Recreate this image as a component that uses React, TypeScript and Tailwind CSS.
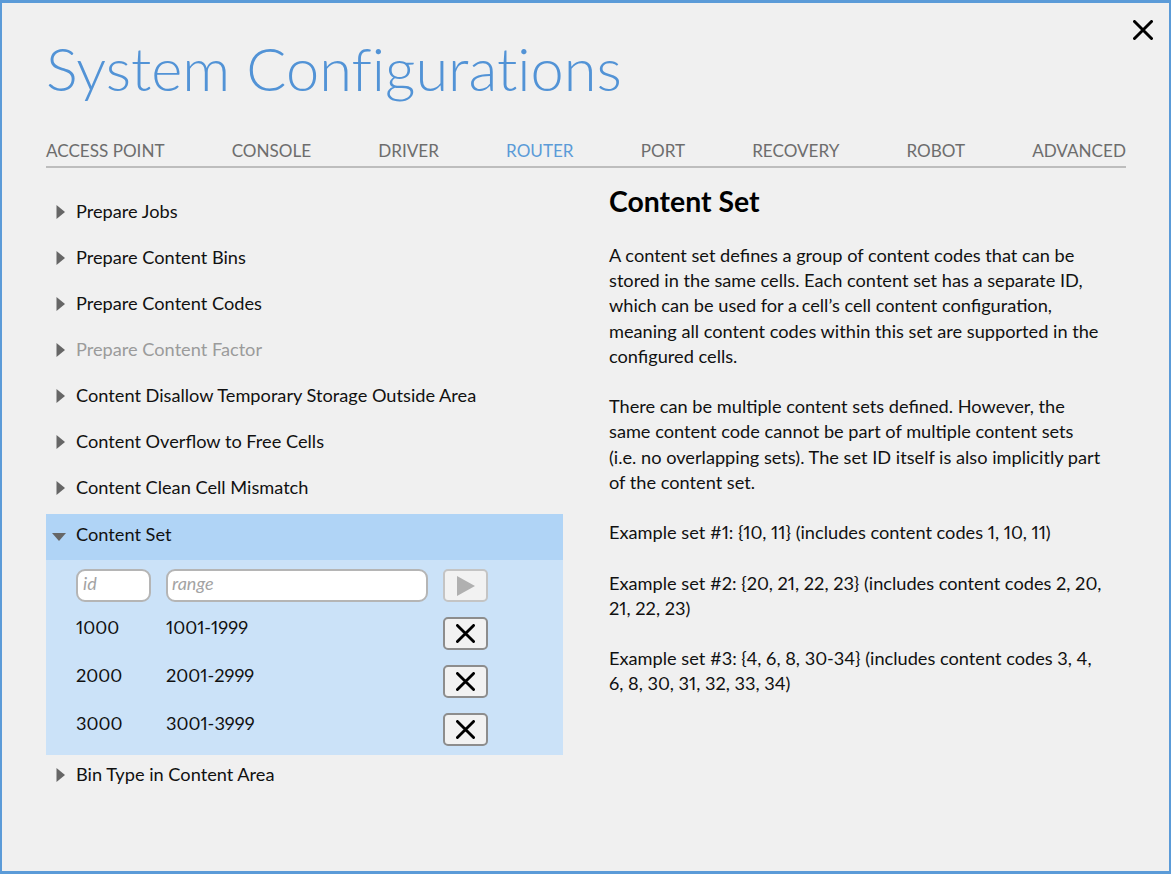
const tabs = ["ACCESS POINT", "CONSOLE", "DRIVER", "ROUTER", "PORT", "RECOVERY", "ROBOT", "ADVANCED"];
const before = [
  "Prepare Jobs",
  "Prepare Content Bins",
  "Prepare Content Codes",
  "Prepare Content Factor",
  "Content Disallow Temporary Storage Outside Area",
  "Content Overflow to Free Cells",
  "Content Clean Cell Mismatch",
];
const sets = [
  ["1000", "1001-1999"],
  ["2000", "2001-2999"],
  ["3000", "3001-3999"],
];

function CloseIcon({ size }: { size: number }) {
  return (
    <svg width={size} height={size} viewBox="0 0 20 20" fill="none" stroke="#000" strokeWidth="3" strokeLinecap="round">
      <path d="M1.5 1.5 L18.5 18.5 M18.5 1.5 L1.5 18.5" />
    </svg>
  );
}

function Right() {
  return (
    <svg width="10" height="16" viewBox="0 0 10 16" className="shrink-0">
      <path d="M0.5 1 L9 8 L0.5 15 Z" fill="#666" />
    </svg>
  );
}

function Row({ label, off }: { label: string; off?: boolean }) {
  return (
    <div className={`flex h-[46px] items-center pb-[6px] pl-[10px] ${off ? "text-[#9b9b9b]" : "text-[#111]"}`}>
      <Right />
      <span className="ml-[10px]">{label}</span>
    </div>
  );
}

export default function App() {
  return (
    <div className="relative h-[874px] w-[1171px] overflow-hidden border-x-2 border-t-[3px] border-b-[3px] border-[#5b9bd8] bg-[#f0f0f0] pl-[44px] pr-[43px] font-['Lato','Liberation_Sans',sans-serif] text-[18.2px] leading-[25.2px] proportional-nums">
      <button className="absolute right-[16px] top-[17px]">
        <CloseIcon size={20} />
      </button>
      <h1 className="pt-[29px] text-[59.5px] font-light leading-[72px] text-[#5293d6] [font-variant-ligatures:none]">System Configurations</h1>
      <div className="mt-[32px] flex h-[32px] items-center justify-between border-b-2 border-[#bdbdbd] text-[17.1px] text-[#6d6d6d]">
        {tabs.map((t) => (
          <span key={t} className={t === "ROUTER" ? "text-[#5b9bd8]" : ""}>{t}</span>
        ))}
      </div>
      <div className="flex">
        <div className="w-[517px] shrink-0 pt-[24px]">
          {before.map((b) => (
            <Row key={b} label={b} off={b === "Prepare Content Factor"} />
          ))}
          <div className="flex h-[46px] items-center bg-[#b0d4f6] pb-[4px] pl-[6px] text-[#111]">
            <svg width="14" height="8" viewBox="0 0 14 8" className="mt-[3px] shrink-0">
              <path d="M0 0 H14 L7 8 Z" fill="#666" />
            </svg>
            <span className="ml-[10px]">Content Set</span>
          </div>
          <div className="h-[195px] bg-[#cbe2f8] pl-[30px] pt-[9px] text-[#111]">
            <div className="flex items-center">
              <input placeholder="id" className="h-[33px] w-[75px] rounded-[9px] border-2 border-[#b5b5b5] bg-white px-[5px] pb-[5px] text-[18px] italic outline-none placeholder:text-[#a3a3a3]" />
              <input placeholder="range" className="ml-[15px] h-[33px] w-[262px] rounded-[9px] border-2 border-[#b5b5b5] bg-white px-[4px] pb-[5px] text-[18px] italic outline-none placeholder:text-[#a3a3a3]" />
              <button className="ml-[15px] flex h-[33px] w-[45px] items-center justify-center rounded-[5px] border-2 border-[#c4c4c4] bg-[#f2f2f2]">
                <svg width="18" height="20" viewBox="0 0 18 20">
                  <path d="M0 0 L18 10 L0 20 Z" fill="#b0b0b0" />
                </svg>
              </button>
            </div>
            <div className="mt-[15px] flex flex-col gap-[15px]">
              {sets.map(([id, range]) => (
                <div key={id} className="flex h-[33px] items-start">
                  <span className="w-[90px] leading-[20px]">{id}</span>
                  <span className="w-[277px] leading-[20px]">{range}</span>
                  <button className="flex h-[33px] w-[45px] items-center justify-center rounded-[5px] border-2 border-[#8d8d8d] bg-[#f2f2f2]">
                    <CloseIcon size={19} />
                  </button>
                </div>
              ))}
            </div>
          </div>
          <Row label="Bin Type in Content Area" />
        </div>
        <div className="ml-[46px] w-[510px] pt-[15px] text-[#111]">
          <h2 className="text-[28.4px] font-bold leading-[36px] text-black">Content Set</h2>
          <div className="mt-[24px] flex flex-col gap-[25.2px]">
            <p>A content set defines a group of content codes that can be<br />stored in the same cells. Each content set has a separate ID,<br />which can be used for a cell’s cell content configuration,<br />meaning all content codes within this set are supported in the<br />configured cells.</p>
            <p>There can be multiple content sets defined. However, the<br />same content code cannot be part of multiple content sets<br />(i.e. no overlapping sets). The set ID itself is also implicitly part<br />of the content set.</p>
            <p>Example set #1: {"{10, 11}"} (includes content codes 1, 10, 11)</p>
            <p>Example set #2: {"{20, 21, 22, 23}"} (includes content codes 2, 20,<br />21, 22, 23)</p>
            <p>Example set #3: {"{4, 6, 8, 30-34}"} (includes content codes 3, 4,<br />6, 8, 30, 31, 32, 33, 34)</p>
          </div>
        </div>
      </div>
    </div>
  );
}
